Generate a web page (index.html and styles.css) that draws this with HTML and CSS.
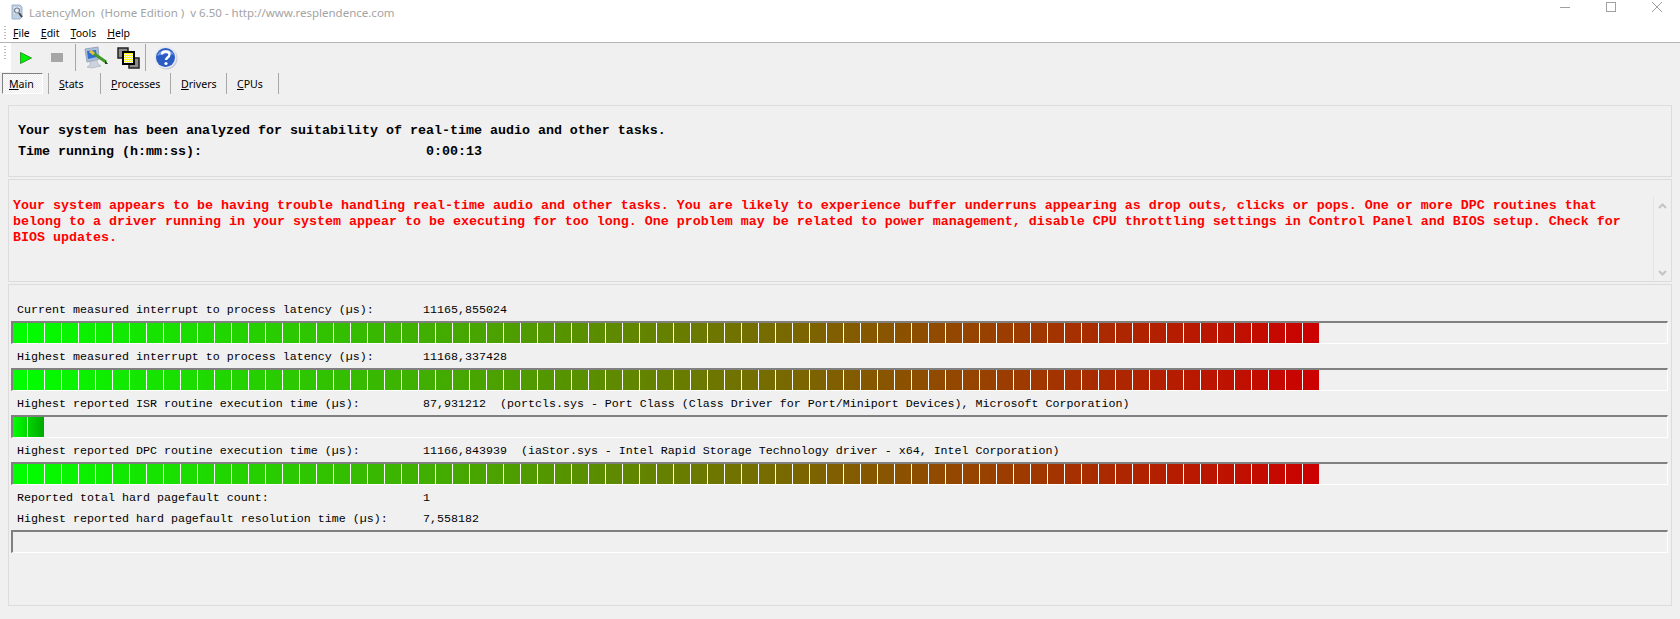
FILE: index.html
```html
<!DOCTYPE html>
<html lang="en">
<head>
  <meta charset="UTF-8" />
  <title>LatencyMon</title>
  <link rel="stylesheet" href="styles.css">
</head>
<body>

  <!-- title bar -->
  <header class="titlebar">
    <svg class="app-icon" width="16" height="16" viewBox="0 0 16 16">
      <path d="M3 1h8l2 2v10l-2 2H3z" fill="#bcd0e6" stroke="#9fb2c8"/>
      <rect x="5" y="3" width="6" height="7" fill="#e6edf5"/>
      <circle cx="8" cy="6.500" r="2.500" fill="none" stroke="#7a7f88" stroke-width="1.200"/>
      <path d="M10 9l3 4" stroke="#4a4a4a" stroke-width="2"/>
    </svg>
    <span class="title-text">LatencyMon&nbsp; (Home Edition )&nbsp; v 6.50 - http://www.resplendence.com</span>
    <div class="win-btns">
      <svg width="10" height="10" viewBox="0 0 10 10"><path d="M0 5.500h10" stroke="#a0a0a0"/></svg>
      <svg width="10" height="10" viewBox="0 0 10 10"><rect x=".5" y=".5" width="9" height="9" fill="none" stroke="#a0a0a0"/></svg>
      <svg width="10" height="10" viewBox="0 0 10 10"><path d="M0 0l10 10M10 0L0 10" stroke="#a0a0a0"/></svg>
    </div>
  </header>

  <!-- menu -->
  <nav class="menubar">
    <span class="grip"></span>
    <span class="menu-item"><u>F</u>ile</span>
    <span class="menu-item"><u>E</u>dit</span>
    <span class="menu-item"><u>T</u>ools</span>
    <span class="menu-item"><u>H</u>elp</span>
  </nav>

  <!-- toolbar -->
  <div class="toolbar">
    <span class="grip-box"><span class="grip"></span></span>
    <span class="tool tool-play">
      <svg width="12" height="12" viewBox="0 0 12 12"><path d="M.5.5L11.500 6 .5 11.500z" fill="#00f000" stroke="#2a9a2a"/></svg>
    </span>
    <span class="tool tool-stop"><span class="stop-shape"></span></span>
    <span class="tool-sep"></span>
    <span class="tool tool-wide">
      <svg width="24" height="23" viewBox="0 0 24 23">
        <path d="M1 3l13-2 1 12-12 3z" fill="#a9bfdc" stroke="#9aa6b8"/>
        <path d="M3 5l9-1 1 7-9 2z" fill="#2f6fd0"/>
        <path d="M6 16l7-2 1 4 3 2-9 2-5-1 3-2z" fill="#ccd3de" stroke="#a4adba" stroke-width=".6"/>
        <path d="M9 7l13 9" stroke="#3f9a2a" stroke-width="3"/>
        <path d="M6 5l4 3" stroke="#e8c040" stroke-width="3"/>
        <path d="M21 14l3 4-3 0z" fill="#1a4a10"/>
      </svg>
    </span>
    <span class="tool tool-squares">
      <svg width="23" height="22" viewBox="0 0 23 22">
        <defs>
          <pattern id="dither" width="2" height="2" patternUnits="userSpaceOnUse">
            <rect width="2" height="2" fill="#ffff00"/>
            <rect width="1" height="1" fill="#f8f8f8"/>
            <rect x="1" y="1" width="1" height="1" fill="#f8f8f8"/>
          </pattern>
        </defs>
        <rect x="1" y="1" width="10" height="10" fill="#8c8c8c" stroke="#222" stroke-width="1.500"/>
        <rect x="12" y="11" width="10" height="10" fill="#8c8c8c" stroke="#222" stroke-width="1.500"/>
        <rect x="6" y="5" width="11" height="12" fill="url(#dither)" stroke="#000" stroke-width="2"/>
      </svg>
    </span>
    <span class="tool-sep tool-sep-2"></span>
    <span class="tool tool-help">
      <svg width="24" height="24" viewBox="0 0 24 24">
        <circle cx="12.500" cy="12.500" r="11" fill="#c9c9d4"/>
        <circle cx="11.500" cy="11.500" r="11" fill="#e4e8f2"/>
        <circle cx="11.500" cy="11.500" r="9.500" fill="#2a5cc4"/>
        <path d="M3 10a9 8 0 0 1 17 -1q-8 -3 -17 1z" fill="#6f97e4"/>
        <path d="M8 8.500c0-4 7.500-4 7.500 0 0 3-3.500 3-3.500 5.500" fill="none" stroke="#fff" stroke-width="2.400"/>
        <circle cx="12" cy="17.500" r="1.600" fill="#fff"/>
      </svg>
    </span>
  </div>

  <!-- tabs -->
  <div class="tabs">
    <span class="tab tab-active"><u>M</u>ain</span>
    <span class="tab tab-stats"><u>S</u>tats</span>
    <span class="tab tab-processes"><u>P</u>rocesses</span>
    <span class="tab tab-drivers"><u>D</u>rivers</span>
    <span class="tab tab-cpus"><u>C</u>PUs</span>
  </div>

  <main class="content">

    <section class="panel panel-status">
      <p class="status-line">Your system has been analyzed for suitability of real-time audio and other tasks.</p>
      <p class="status-line"><span class="status-label">Time running (h:mm:ss):</span>0:00:13</p>
    </section>

    <section class="panel panel-verdict">
      <p class="verdict">Your system appears to be having trouble handling real-time audio and other tasks. You are likely to experience buffer underruns appearing as drop outs, clicks or pops. One or more DPC routines that belong to a driver running in your system appear to be executing for too long. One problem may be related to power management, disable CPU throttling settings in Control Panel and BIOS setup. Check for BIOS updates.</p>
      <div class="scrollbar">
        <svg width="9" height="6" viewBox="0 0 9 6"><path d="M1 5l3.500-3.500L8 5" fill="none" stroke="#c4c4c4" stroke-width="2"/></svg>
        <svg width="9" height="6" viewBox="0 0 9 6"><path d="M1 1l3.500 3.500L8 1" fill="none" stroke="#c4c4c4" stroke-width="2"/></svg>
      </div>
    </section>

    <section class="panel panel-meters">
      <div class="row"><span class="row-label">Current measured interrupt to process latency (µs):</span><span class="row-value">11165,855024</span></div>
      <div class="meter"><div class="meter-fill meter-full"></div></div>

      <div class="row"><span class="row-label">Highest measured interrupt to process latency (µs):</span><span class="row-value">11168,337428</span></div>
      <div class="meter"><div class="meter-fill meter-full"></div></div>

      <div class="row"><span class="row-label">Highest reported ISR routine execution time (µs):</span><span class="row-value">87,931212  (portcls.sys - Port Class (Class Driver for Port/Miniport Devices), Microsoft Corporation)</span></div>
      <div class="meter"><div class="meter-fill meter-small"></div></div>

      <div class="row"><span class="row-label">Highest reported DPC routine execution time (µs):</span><span class="row-value">11166,843939  (iaStor.sys - Intel Rapid Storage Technology driver - x64, Intel Corporation)</span></div>
      <div class="meter"><div class="meter-fill meter-full"></div></div>

      <div class="row"><span class="row-label">Reported total hard pagefault count:</span><span class="row-value">1</span></div>
      <div class="row row-tight"><span class="row-label">Highest reported hard pagefault resolution time (µs):</span><span class="row-value">7,558182</span></div>
      <div class="meter"></div>
    </section>

  </main>

</body>
</html>
```

FILE: styles.css
```css
/* Reset */
* {
  box-sizing: border-box;
}
html, body {
  height: 100%;
}
body {
  margin: 0;
  background: #f0f0f0;
  font-family: "Noto Sans", "Open Sans", sans-serif;
  color: #000;
  overflow: hidden;
}
p {
  margin: 0;
}

/* Title bar */
.titlebar {
  height: 24px;
  background: #fff;
  display: flex;
  align-items: center;
  padding-left: 9px;
}
.app-icon {
  margin-right: 4px;
}
.title-text {
  font-size: 11.5px;
  color: #a3a3a3;
}
.win-btns {
  margin-left: auto;
  display: flex;
  align-items: center;
  gap: 36px;
  padding: 0 18px 10px 0;
}

/* Menu */
.menubar {
  height: 19px;
  background: #fff;
  border-bottom: 1px solid #b4b4b4;
  display: flex;
  align-items: center;
  padding-left: 4px;
  font-size: 10.5px;
}
.grip {
  width: 2px;
  height: 15px;
  display: block;
  background: repeating-linear-gradient(#bbb 0 1px, transparent 1px 3px);
}
.menu-item {
  margin-left: 7px;
  margin-right: 4px;
}
.menu-item u {
  text-underline-offset: 1px;
}

/* Toolbar */
.toolbar {
  height: 29px;
  display: flex;
  align-items: center;
}
.grip-box {
  width: 11px;
  height: 100%;
  background: #fff;
  padding: 3px 0 0 4px;
}
.tool {
  display: flex;
  align-items: center;
  justify-content: center;
}
.tool-play {
  margin-left: 9px;
  width: 12px;
}
.tool-stop {
  margin-left: 19px;
  width: 12px;
}
.stop-shape {
  width: 12px;
  height: 9px;
  background: #a6a6a6;
}
.tool-sep {
  width: 1px;
  height: 27px;
  background: #a8a8a8;
  margin-left: 12px;
}
.tool-wide {
  margin-left: 8px;
}
.tool-squares {
  margin-left: 9px;
}
.tool-sep-2 {
  margin-left: 5px;
}
.tool-help {
  margin-left: 8px;
}

/* Tabs */
.tabs {
  height: 23px;
  display: flex;
  font-size: 10.6px;
  align-items: center;
  padding-left: 2px;
}
.tab {
  height: 21px;
  display: flex;
  align-items: center;
  border-right: 1px solid #a8a8a8;
}
.tab-active {
  width: 41px;
  padding-left: 6px;
  margin-right: 5px;
  border: 1px solid;
  border-color: #808080 #fff #fff #808080;
  background: repeating-conic-gradient(#fff 0 25%, #ececec 0 50%) 0 0 / 2px 2px;
}
.tab-stats {
  width: 53px;
  padding-left: 10px;
  border-left: 1px solid #a8a8a8;
}
.tab-processes {
  width: 70px;
  padding-left: 10px;
}
.tab-drivers {
  width: 56px;
  padding-left: 10px;
}
.tab-cpus {
  width: 52px;
  padding-left: 10px;
}

/* Panels */
.content {
  padding: 10px 8px 0;
}
.panel {
  border: 1px solid #dcdcdc;
  margin-bottom: 2px;
  font-family: "Liberation Mono", monospace;
}
.panel-status {
  height: 72px;
  padding: 14px 0 0 9px;
  font-size: 13.34px;
  font-weight: bold;
}
.status-line {
  height: 21px;
  line-height: 21px;
  white-space: pre;
}
.status-label {
  display: inline-block;
  width: 408px;
}
.panel-verdict {
  height: 103px;
  padding: 18px 0 0 4px;
  display: flex;
}
.verdict {
  flex: 1;
  margin-right: 28px;
  font-size: 13.34px;
  font-weight: bold;
  line-height: 16px;
  color: #ff0000;
}
.scrollbar {
  width: 17px;
  border-left: 1px solid #e4e4e4;
  margin: -1px 1px 0 0;
  display: flex;
  flex-direction: column;
  justify-content: space-between;
  align-items: center;
  padding: 6px 0 5px;
}
.panel-meters {
  height: 322px;
  padding: 12px 3px 0 2px;
  font-size: 11.67px;
}

/* Rows with label and value */
.row {
  height: 24px;
  line-height: 26px;
  display: flex;
  padding-left: 6px;
  white-space: pre;
}
.row-tight {
  height: 21px;
  line-height: 21px;
}
.row-label {
  width: 406px;
}

/* Meter bars */
.meter {
  height: 23px;
  border-top: 2px solid #808080;
  border-left: 2px solid #808080;
  border-right: 1px solid #fff;
  border-bottom: 1px solid #fff;
}
.meter-fill {
  height: 100%;
  background:
    repeating-linear-gradient(90deg, transparent 0 16px, #fff 16px 17px) -2px 0,
    linear-gradient(90deg, #00ff00, #cc0000);
}
.meter-full {
  width: 1306px;
}
.meter-small {
  width: 31px;
  background:
    repeating-linear-gradient(90deg, transparent 0 16px, #fff 16px 17px) -2px 0,
    linear-gradient(90deg, #00ff00, #00a800);
}
```
